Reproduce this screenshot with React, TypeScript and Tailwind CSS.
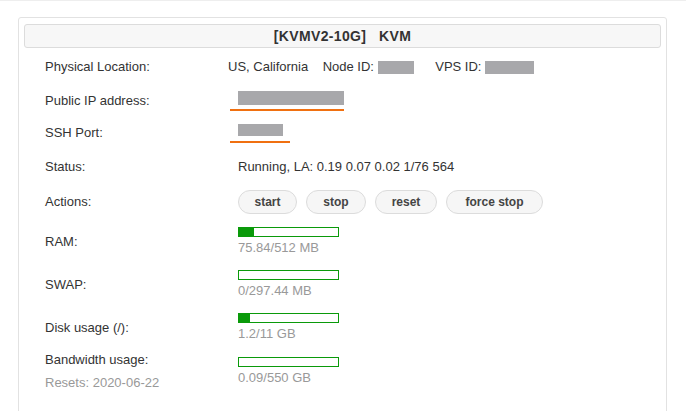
const Blur = ({ w, h = 13 }: { w: number; h?: number }) => (
  <span className="inline-block bg-[#a8a8ab] align-middle" style={{ width: w, height: h }} />
)

const Bar = ({ fill, label }: { fill: number; label: string }) => (
  <div className="flex flex-col">
    <div className="w-[101px] h-[10px] border border-[#0a9a0a] bg-white">
      <div className="h-full bg-[#0a9a0a]" style={{ width: fill }} />
    </div>
    <div className="text-[#999] text-[13px] mt-[3px] leading-4">{label}</div>
  </div>
)

function Row({ label, sub, h, children }: { label: string; sub?: string; h: number; children?: React.ReactNode }) {
  return (
    <div className="flex items-center" style={{ height: h }}>
      <div className="w-[214px] pl-[21px] text-[#333]">
        <div>{label}</div>
        {sub && <div className="text-[#999] mt-[3px]">{sub}</div>}
      </div>
      <div className="flex-1">{children}</div>
    </div>
  )
}

const Btn = ({ t, w }: { t: string; w: number }) => (
  <button className="h-[24px] rounded-full border border-[#dcdcdc] bg-[#f6f6f6] text-[12px] font-bold text-[#444]" style={{ width: w }}>
    {t}
  </button>
)

export default function App() {
  return (
    <div className="w-[686px] h-[411px] bg-white overflow-hidden text-[13px] font-[Liberation_Sans,Arial,sans-serif] border-t border-[#eee]">
      <div className="mt-[16px] ml-[18px] w-[649px] h-[420px] border border-[#e2e2e2] rounded-[3px] px-[5px] pt-[6px]">
        <div className="h-[24px] border border-[#dcdcdc] rounded-[3px] bg-[#f7f7f7] flex items-center justify-center font-bold text-[14px] text-[#333] tracking-wide">
          [KVMV2-10G]&nbsp;&nbsp;&nbsp;KVM
        </div>
        <Row label="Physical Location:" h={38}>
          <span className="text-[#333] -ml-[10px]">
            US, California&nbsp;&nbsp;&nbsp; Node ID: <Blur w={36} />&nbsp;&nbsp;&nbsp;&nbsp;&nbsp;&nbsp;VPS ID: <Blur w={49} />
          </span>
        </Row>
        <Row label="Public IP address:" h={30}>
          <div className="flex flex-col w-[114px] -ml-[8px] items-end">
            <Blur w={106} h={14} />
            <div className="mt-[4px] w-[114px] h-[2px] bg-[#f07010]" />
          </div>
        </Row>
        <Row label="SSH Port:" h={34}>
          <div className="flex flex-col w-[60px] -ml-[8px] items-center">
            <Blur w={45} h={12} />
            <div className="mt-[5px] w-[60px] h-[2px] bg-[#f07010]" />
          </div>
        </Row>
        <Row label="Status:" h={34}>
          <span className="text-[#333]">Running, LA: 0.19 0.07 0.02 1/76 564</span>
        </Row>
        <Row label="Actions:" h={36}>
          <div className="flex gap-[9px] items-center">
            <Btn t="start" w={59} />
            <Btn t="stop" w={60} />
            <Btn t="reset" w={62} />
            <Btn t="force stop" w={97} />
          </div>
        </Row>
        <Row label="RAM:" h={43}>
          <Bar fill={15} label="75.84/512 MB" />
        </Row>
        <Row label="SWAP:" h={43}>
          <Bar fill={0} label="0/297.44 MB" />
        </Row>
        <Row label="Disk usage (/):" h={43}>
          <Bar fill={11} label="1.2/11 GB" />
        </Row>
        <Row label="Bandwidth usage:" sub="Resets: 2020-06-22" h={44}>
          <Bar fill={0} label="0.09/550 GB" />
        </Row>
      </div>
    </div>
  )
}
